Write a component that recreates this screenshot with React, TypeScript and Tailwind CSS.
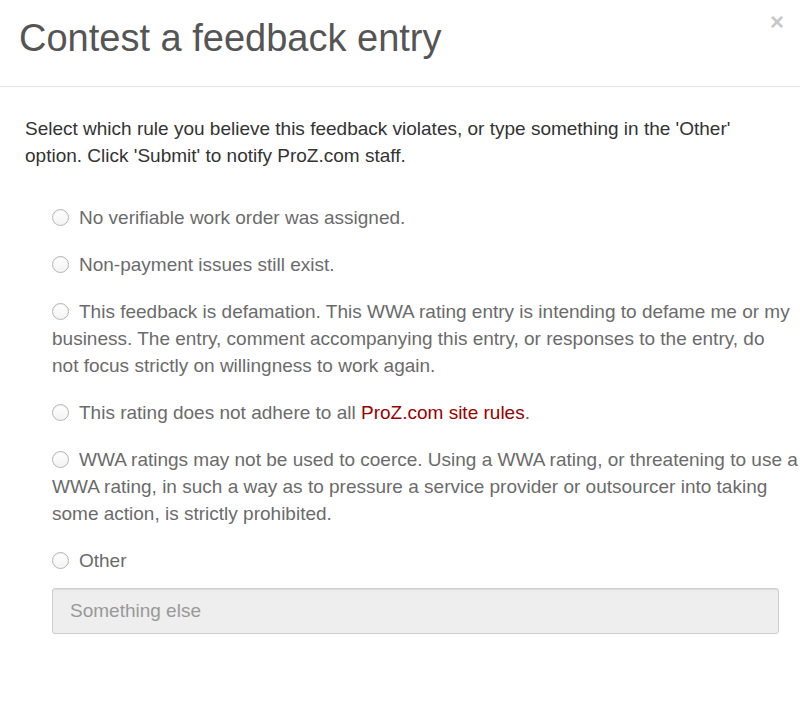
import { useState } from 'react';

const rules = [
  { id: 'order', text: 'No verifiable work order was assigned.' },
  { id: 'payment', text: 'Non-payment issues still exist.' },
  {
    id: 'defamation',
    text: 'This feedback is defamation. This WWA rating entry is intending to defame me or my business. The entry, comment accompanying this entry, or responses to the entry, do not focus strictly on willingness to work again.',
    narrow: true,
  },
  { id: 'siterules', text: 'This rating does not adhere to all ', link: 'ProZ.com site rules' },
  {
    id: 'coerce',
    text: 'WWA ratings may not be used to coerce. Using a WWA rating, or threatening to use a WWA rating, in such a way as to pressure a service provider or outsourcer into taking some action, is strictly prohibited.',
  },
  { id: 'other', text: 'Other' },
];

function Radio({ checked, onClick }: { checked: boolean; onClick: () => void }) {
  return (
    <span
      onClick={onClick}
      className="mr-[10px] inline-block h-[17px] w-[17px] translate-y-[-1px] cursor-pointer rounded-full border border-[#b5b5b5] bg-gradient-to-b from-white to-[#f3f3f3] align-middle shadow-[inset_0_1px_1px_rgba(0,0,0,0.06)]"
    >
      {checked && <span className="m-[4px] block h-[7px] w-[7px] rounded-full bg-[#555]" />}
    </span>
  );
}

function App() {
  const [picked, setPicked] = useState('');

  return (
    <div className="min-h-[723px] w-[800px] bg-white font-['Liberation_Sans',Arial,sans-serif]">
      <div className="flex h-[87px] items-start justify-between border-b border-[#e5e5e5] pl-[19px] pr-[16px]">
        <h4 className="mt-[14px] text-[38px] leading-[48px] text-[#555]">Contest a feedback entry</h4>
        <button className="mt-[10px] text-[24px] font-bold leading-[24px] text-[#c8c8c8]">×</button>
      </div>

      <div className="pl-[25px] pr-[2px] pt-[28px]">
        <p className="pr-[23px] text-[19px] leading-[27px] text-[#333]">
          Select which rule you believe this feedback violates, or type something in the 'Other' option. Click
          'Submit' to notify ProZ.com staff.
        </p>

        <div className="mt-[35px] flex flex-col gap-[20px] pl-[27px] text-[19px] leading-[27px] text-[#6b6b6b]">
          {rules.map((r) => (
            <div key={r.id} className={r.narrow ? 'pr-[8px]' : ''}>
              <Radio checked={picked === r.id} onClick={() => setPicked(r.id)} />
              {r.text}
              {r.link && (
                <>
                  <a className="text-[#990000]">{r.link}</a>.
                </>
              )}
            </div>
          ))}
          <input
            disabled
            placeholder="Something else"
            className="-mt-[6px] h-[46px] w-[727px] rounded-[3px] border border-[#cfcfcf] bg-[#eeeeee] px-[17px] text-[19px] text-[#555] shadow-[inset_0_1px_1px_rgba(0,0,0,0.075)] placeholder:text-[#999]"
          />
        </div>
      </div>
    </div>
  );
}

export default App;
